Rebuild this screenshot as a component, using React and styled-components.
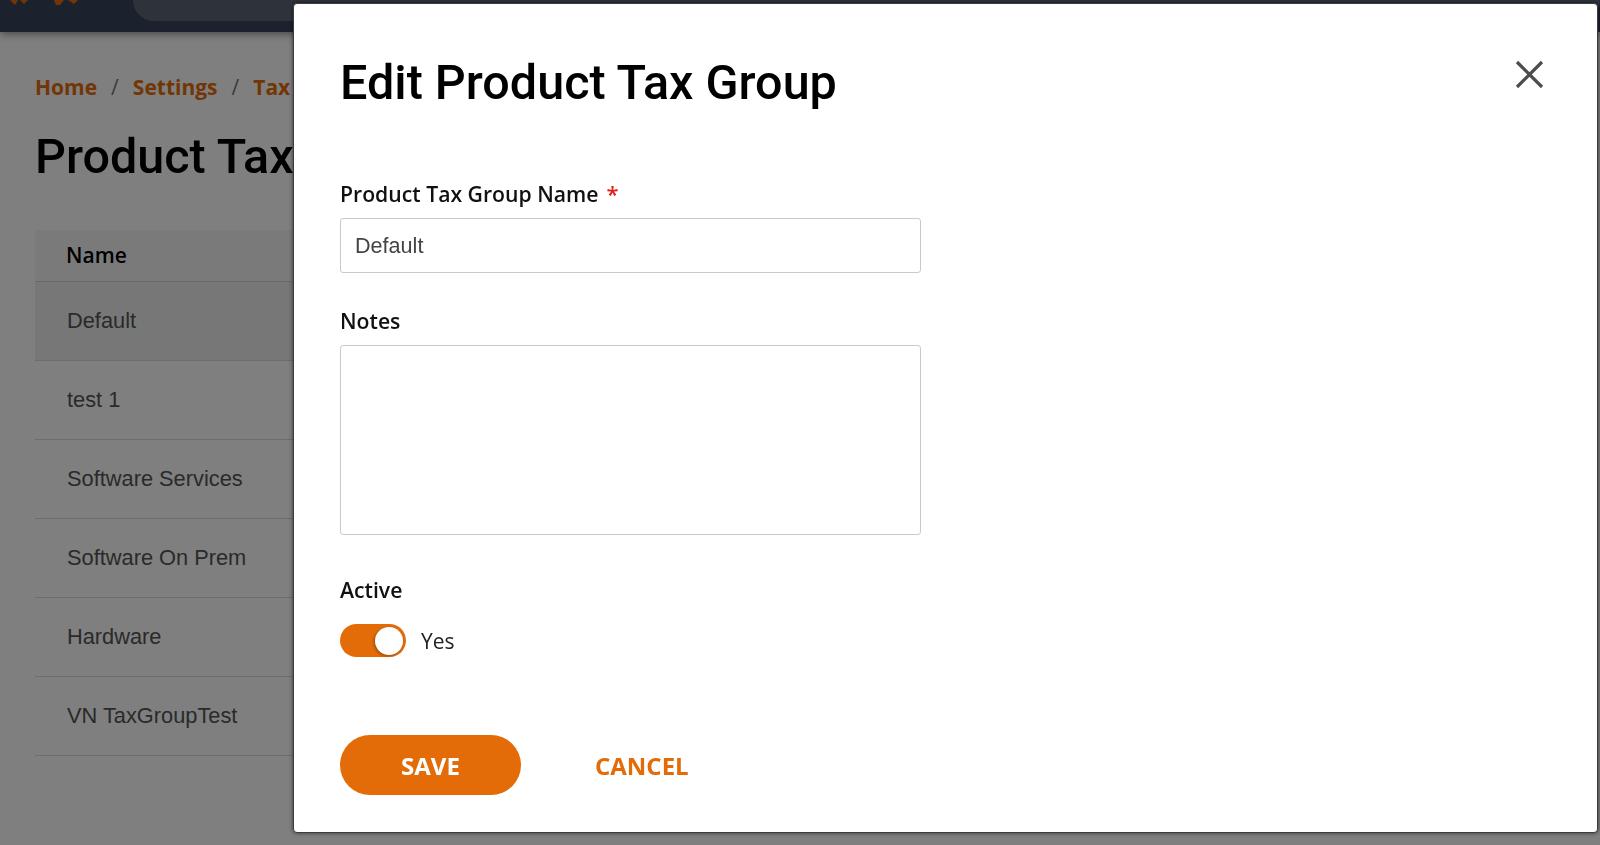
import React from "react";
import styled, { createGlobalStyle } from "styled-components";

const GlobalStyle = createGlobalStyle`
  html, body { margin: 0; padding: 0; }
  body { font-family: "Open Sans", sans-serif; background: #ffffff; overflow: hidden; }
  * { box-sizing: border-box; }
`;

const ORANGE = "#e36c09";

const Page = styled.div`
  min-height: 845px;
  background: #ffffff;
`;

const TopBar = styled.header`
  height: 32px;
  background: #36445a;
  display: flex;
  align-items: flex-start;
  padding-left: 10px;
  gap: 43px;
  box-shadow: 0 2px 8px rgba(0, 0, 0, 0.45);
  position: relative;
`;

const Logo = styled.svg`
  width: 80px;
  height: 32px;
  flex: none;
`;

const SearchPill = styled.div`
  flex: 1;
  height: 21px;
  background: #5d6677;
  border-radius: 0 0 21px 21px;
`;

const Content = styled.main`
  padding: 41px 35px 0;
`;

const Breadcrumb = styled.nav`
  display: flex;
  align-items: center;
  font-family: "Open Sans", sans-serif;
  font-weight: 700;
  font-size: 21px;
  line-height: 29px;
`;

const Crumb = styled.a`
  color: ${ORANGE};
  text-decoration: none;
`;

const Sep = styled.span`
  color: #777;
  font-weight: 400;
  margin: 0 14px;
`;

const PageTitle = styled.h1`
  font-family: Roboto, sans-serif;
  font-weight: 500;
  font-size: 48.5px;
  line-height: 1.2;
  color: #000;
  margin: 26px 0 44px;
`;

const Table = styled.table`
  width: 100%;
  border-collapse: collapse;
`;

const HeadCell = styled.th`
  height: 51px;
  padding: 0 31px;
  text-align: left;
  background: #f5f5f5;
  border-bottom: 1px solid #d2d2d2;
  font-family: "Open Sans", sans-serif;
  font-weight: 600;
  font-size: 21px;
  color: #000;
`;

const Row = styled.tr`
  background: ${(p) => (p.$hover ? "#eeeeee" : "transparent")};
  border-bottom: 1px solid #d8d8d8;
`;

const Cell = styled.td`
  height: 79px;
  padding: 0 31px 0 32px;
  font-family: "Liberation Sans", Arial, sans-serif;
  font-size: 21.8px;
  color: #555;
`;

const Overlay = styled.div`
  position: fixed;
  inset: 0;
  background: rgba(0, 0, 0, 0.5);
`;

const Modal = styled.div`
  position: fixed;
  top: 3px;
  left: 293px;
  right: 2px;
  background: #ffffff;
  border: 1px solid #3c3c3c;
  border-radius: 4px;
  box-shadow: 0 0 4px rgba(0, 0, 0, 0.6);
  padding: 50px 48px 37px 46px;
`;

const ModalHeader = styled.div`
  display: flex;
  justify-content: space-between;
  align-items: flex-start;
`;

const ModalTitle = styled.h2`
  font-family: Roboto, sans-serif;
  font-weight: 500;
  font-size: 48.5px;
  line-height: 1.2;
  color: #000;
  margin: 0;
`;

const CloseButton = styled.button`
  width: 40px;
  height: 40px;
  border: 0;
  background: transparent;
  padding: 0;
  display: flex;
  align-items: center;
  justify-content: center;
  cursor: pointer;
`;

const Form = styled.form`
  margin-top: 67px;
  display: flex;
  flex-direction: column;
  align-items: flex-start;
`;

const Label = styled.label`
  display: block;
  font-family: "Open Sans", sans-serif;
  font-weight: 600;
  font-size: 21.2px;
  line-height: 29px;
  color: #111;
  margin-top: ${(p) => p.$top || 0}px;
  margin-bottom: ${(p) => p.$bottom || 10}px;
`;

const Required = styled.span`
  color: #e0201a;
  margin-left: 8px;
  font-size: 22px;
`;

const TextInput = styled.input`
  width: 581px;
  height: 55px;
  border: 1px solid #c8c8d2;
  border-radius: 3px;
  padding: 0 14px;
  font-family: "Liberation Sans", Arial, sans-serif;
  font-size: 21.6px;
  color: #444;
  outline: none;
`;

const TextArea = styled.textarea`
  display: block;
  width: 581px;
  height: 190px;
  border: 1px solid #c8c8d2;
  border-radius: 3px;
  padding: 12px 14px;
  font-family: "Liberation Sans", Arial, sans-serif;
  font-size: 21.6px;
  color: #444;
  resize: none;
  outline: none;
`;

const ToggleRow = styled.div`
  display: flex;
  align-items: center;
  gap: 15px;
`;

const Switch = styled.button`
  position: relative;
  width: 66px;
  height: 33px;
  border: 0;
  border-radius: 17px;
  background: ${(p) => (p.$on ? ORANGE : "#bbb")};
  padding: 0;
  cursor: pointer;
`;

const Knob = styled.span`
  position: absolute;
  top: 2.5px;
  ${(p) => (p.$on ? "right: 3px;" : "left: 3px;")}
  width: 28px;
  height: 28px;
  border-radius: 50%;
  background: #fff;
  box-shadow: -1px 1px 3px rgba(0, 0, 0, 0.35);
`;

const ToggleText = styled.span`
  font-family: "Open Sans", sans-serif;
  font-size: 21px;
  color: #222;
`;

const Actions = styled.div`
  margin-top: 78px;
  display: flex;
  align-items: center;
  gap: 74px;
`;

const SaveButton = styled.button`
  width: 181px;
  height: 60px;
  border: 0;
  border-radius: 30px;
  background: ${ORANGE};
  color: #fff;
  font-family: "Open Sans", sans-serif;
  font-weight: 700;
  font-size: 24px;
  text-transform: uppercase;
  cursor: pointer;
`;

const CancelButton = styled.button`
  border: 0;
  background: transparent;
  padding: 0;
  color: ${ORANGE};
  font-family: "Open Sans", sans-serif;
  font-weight: 700;
  font-size: 24px;
  text-transform: uppercase;
  cursor: pointer;
`;

const rows = [
  "Default",
  "test 1",
  "Software Services",
  "Software On Prem",
  "Hardware",
  "VN TaxGroupTest",
];

export default function App() {
  return (
    <>
      <GlobalStyle />
      <Page>
        <TopBar>
          <Logo viewBox="0 0 80 32">
            <polygon points="0,0 8,0 5,5" fill={ORANGE} />
            <polygon points="10,0 18,0 14,4" fill={ORANGE} />
            <polygon points="44,0 54,0 50,5 46,5" fill={ORANGE} />
            <polygon points="58,0 68,0 64,4" fill={ORANGE} />
          </Logo>
          <SearchPill />
        </TopBar>
        <Content>
          <Breadcrumb>
            <Crumb href="#">Home</Crumb>
            <Sep>/</Sep>
            <Crumb href="#">Settings</Crumb>
            <Sep>/</Sep>
            <Crumb href="#">Tax</Crumb>
          </Breadcrumb>
          <PageTitle>Product Tax Groups</PageTitle>
          <Table>
            <thead>
              <tr>
                <HeadCell>Name</HeadCell>
              </tr>
            </thead>
            <tbody>
              {rows.map((r, i) => (
                <Row key={r} $hover={i === 0}>
                  <Cell>{r}</Cell>
                </Row>
              ))}
            </tbody>
          </Table>
        </Content>
      </Page>
      <Overlay />
      <Modal role="dialog">
        <ModalHeader>
          <ModalTitle>Edit Product Tax Group</ModalTitle>
          <CloseButton aria-label="Close">
            <svg width="29" height="29" viewBox="0 0 29 29">
              <path d="M2 2 L27 27 M27 2 L2 27" stroke="#4d4d4d" strokeWidth="3.2" fill="none" />
            </svg>
          </CloseButton>
        </ModalHeader>
        <Form>
          <Label>
            Product Tax Group Name<Required>*</Required>
          </Label>
          <TextInput defaultValue="Default" />
          <Label $top={33}>Notes</Label>
          <TextArea />
          <Label $top={40} $bottom={20}>Active</Label>
          <ToggleRow>
            <Switch type="button" role="switch" aria-checked="true" $on>
              <Knob $on />
            </Switch>
            <ToggleText>Yes</ToggleText>
          </ToggleRow>
          <Actions>
            <SaveButton type="button">Save</SaveButton>
            <CancelButton type="button">Cancel</CancelButton>
          </Actions>
        </Form>
      </Modal>
    </>
  );
}
